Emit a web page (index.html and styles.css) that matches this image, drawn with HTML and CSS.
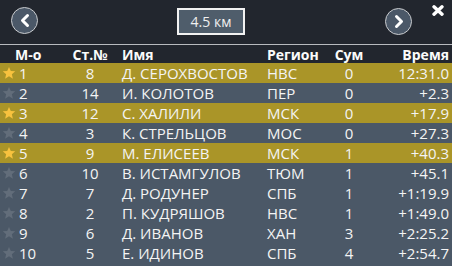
FILE: index.html
```html
<!DOCTYPE html>
<html lang="ru">
<head>
<meta charset="utf-8">
<link rel="stylesheet" href="styles.css">
</head>
<body>
<div class="app">
  <div class="topbar">
    <button class="circ prev" aria-label="prev">
      <svg viewBox="0 0 27 27" width="27" height="27"><path d="M16.5 8.5 L11.5 13.5 L16.5 18.5" fill="none" stroke="#fff" stroke-width="3" stroke-linecap="round" stroke-linejoin="round"/></svg>
    </button>
    <div class="dist">4.5 км</div>
    <button class="circ next" aria-label="next">
      <svg viewBox="0 0 27 27" width="27" height="27"><path d="M11.5 8.5 L16.5 13.5 L11.5 18.5" fill="none" stroke="#fff" stroke-width="3" stroke-linecap="round" stroke-linejoin="round"/></svg>
    </button>
    <svg class="close" viewBox="0 0 12 11" width="12" height="11"><path d="M2 1.8 L10 9.2 M10 1.8 L2 9.2" stroke="#fff" stroke-width="3.4" stroke-linecap="round"/></svg>
  </div>
  <div class="thead">
    <div class="h-place">М-о</div>
    <div class="c">Ст.№</div>
    <div></div>
    <div>Имя</div>
    <div>Регион</div>
    <div class="c">Сум</div>
    <div class="r">Время</div>
  </div>
  <div class="tbody">
    <div class="row gold"><svg class="star" viewBox="0 0 24 24"><path d="M12 1.5l3.1 7.1 7.6.6-5.8 5 1.8 7.5L12 17.7l-6.7 4 1.8-7.5-5.8-5 7.6-.6z"/></svg><div>1</div><div class="c">8</div><div></div><div>Д. СЕРОХВОСТОВ</div><div>НВС</div><div class="c">0</div><div class="r">12:31.0</div></div>
    <div class="row"><svg class="star" viewBox="0 0 24 24"><path d="M12 1.5l3.1 7.1 7.6.6-5.8 5 1.8 7.5L12 17.7l-6.7 4 1.8-7.5-5.8-5 7.6-.6z"/></svg><div>2</div><div class="c">14</div><div></div><div>И. КОЛОТОВ</div><div>ПЕР</div><div class="c">0</div><div class="r">+2.3</div></div>
    <div class="row gold"><svg class="star" viewBox="0 0 24 24"><path d="M12 1.5l3.1 7.1 7.6.6-5.8 5 1.8 7.5L12 17.7l-6.7 4 1.8-7.5-5.8-5 7.6-.6z"/></svg><div>3</div><div class="c">12</div><div></div><div>С. ХАЛИЛИ</div><div>МСК</div><div class="c">0</div><div class="r">+17.9</div></div>
    <div class="row"><svg class="star" viewBox="0 0 24 24"><path d="M12 1.5l3.1 7.1 7.6.6-5.8 5 1.8 7.5L12 17.7l-6.7 4 1.8-7.5-5.8-5 7.6-.6z"/></svg><div>4</div><div class="c">3</div><div></div><div>К. СТРЕЛЬЦОВ</div><div>МОС</div><div class="c">0</div><div class="r">+27.3</div></div>
    <div class="row gold"><svg class="star" viewBox="0 0 24 24"><path d="M12 1.5l3.1 7.1 7.6.6-5.8 5 1.8 7.5L12 17.7l-6.7 4 1.8-7.5-5.8-5 7.6-.6z"/></svg><div>5</div><div class="c">9</div><div></div><div>М. ЕЛИСЕЕВ</div><div>МСК</div><div class="c">1</div><div class="r">+40.3</div></div>
    <div class="row"><svg class="star" viewBox="0 0 24 24"><path d="M12 1.5l3.1 7.1 7.6.6-5.8 5 1.8 7.5L12 17.7l-6.7 4 1.8-7.5-5.8-5 7.6-.6z"/></svg><div>6</div><div class="c">10</div><div></div><div>В. ИСТАМГУЛОВ</div><div>ТЮМ</div><div class="c">1</div><div class="r">+45.1</div></div>
    <div class="row"><svg class="star" viewBox="0 0 24 24"><path d="M12 1.5l3.1 7.1 7.6.6-5.8 5 1.8 7.5L12 17.7l-6.7 4 1.8-7.5-5.8-5 7.6-.6z"/></svg><div>7</div><div class="c">7</div><div></div><div>Д. РОДУНЕР</div><div>СПБ</div><div class="c">1</div><div class="r">+1:19.9</div></div>
    <div class="row"><svg class="star" viewBox="0 0 24 24"><path d="M12 1.5l3.1 7.1 7.6.6-5.8 5 1.8 7.5L12 17.7l-6.7 4 1.8-7.5-5.8-5 7.6-.6z"/></svg><div>8</div><div class="c">2</div><div></div><div>П. КУДРЯШОВ</div><div>НВС</div><div class="c">1</div><div class="r">+1:49.0</div></div>
    <div class="row"><svg class="star" viewBox="0 0 24 24"><path d="M12 1.5l3.1 7.1 7.6.6-5.8 5 1.8 7.5L12 17.7l-6.7 4 1.8-7.5-5.8-5 7.6-.6z"/></svg><div>9</div><div class="c">6</div><div></div><div>Д. ИВАНОВ</div><div>ХАН</div><div class="c">3</div><div class="r">+2:25.2</div></div>
    <div class="row"><svg class="star" viewBox="0 0 24 24"><path d="M12 1.5l3.1 7.1 7.6.6-5.8 5 1.8 7.5L12 17.7l-6.7 4 1.8-7.5-5.8-5 7.6-.6z"/></svg><div>10</div><div class="c">5</div><div></div><div>Е. ИДИНОВ</div><div>СПБ</div><div class="c">4</div><div class="r">+2:54.7</div></div>
  </div>
</div>
</body>
</html>
```

FILE: styles.css
```css
* { box-sizing: border-box; }
html, body { margin: 0; padding: 0; }
body {
  width: 452px;
  height: 266px;
  overflow: hidden;
  background: #22262e;
  font-family: "Open Sans", "Noto Sans", sans-serif;
  color: #f4f4f4;
}
.app {
  display: flex;
  flex-direction: column;
  height: 266px;
}
.topbar {
  height: 45px;
  flex: none;
  display: flex;
  align-items: flex-start;
  padding-left: 11px;
  border-bottom: 1px solid #b8bbbf;
}
.circ {
  width: 27px;
  height: 27px;
  padding: 0;
  border: 1.5px solid #c9cbce;
  border-radius: 50%;
  background: #4b5868;
  display: flex;
  align-items: center;
  justify-content: center;
  overflow: hidden;
}
.circ svg { flex: none; }
.prev { margin-top: 7px; }
.dist {
  margin-top: 8px;
  margin-left: 139px;
  width: 68px;
  height: 27px;
  border: 2px solid #f2f2f2;
  background: #4f5d6b;
  font-size: 14px;
  display: flex;
  align-items: center;
  justify-content: center;
  color: #f0f0f0;
}
.next { margin-top: 8px; margin-left: 140px; }
.close { margin-top: 5px; margin-left: 20px; }

.thead, .row {
  display: grid;
  grid-template-columns: 17px 45px 52px 6px 145px 63px 38px 1fr;
  padding: 0 3px 0 2px;
  align-items: center;
  white-space: nowrap;
}
.thead {
  height: 18px;
  flex: none;
  font-weight: 700;
  font-size: 14px;
  color: #fbfbfb;
}
.h-place {
  grid-column: 1 / span 2;
  padding-left: 13px;
}
.c { text-align: center; }
.r { text-align: right; }
.tbody {
  flex: 1;
  background: #4b5867;
}
.row {
  height: 20px;
  font-size: 15px;
  line-height: 20px;
}
.row.gold { background: #aa9528; }
.star {
  width: 14px;
  height: 14px;
  fill: #626d7a;
}
.gold .star { fill: #f7c23e; }
```
